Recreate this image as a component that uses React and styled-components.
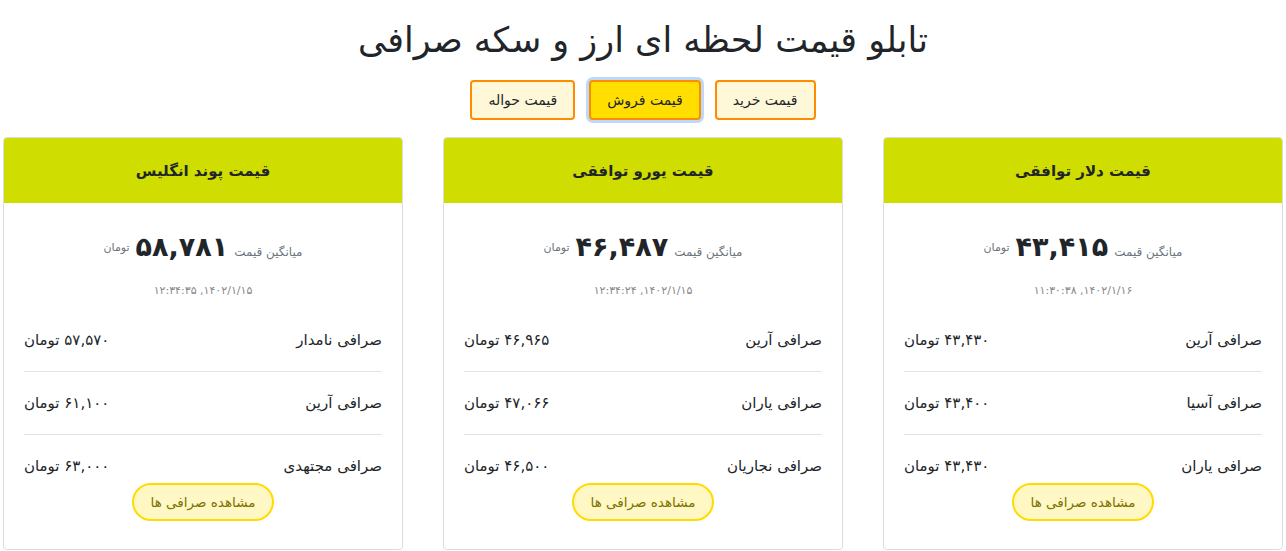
import React, { useState } from "react";
import styled, { createGlobalStyle } from "styled-components";

const GlobalStyle = createGlobalStyle`
  body { margin: 0; background: #fff; font-family: "DejaVu Sans", "Noto Sans", sans-serif; color: #212529; }
`;

const Page = styled.div`
  direction: rtl;
  padding-top: 14px;
`;

const Title = styled.h1`
  margin: 0;
  text-align: center;
  font-size: 35px;
  font-weight: 400;
  line-height: 52px;
  color: #212529;
`;

const Tabs = styled.div`
  display: flex;
  justify-content: center;
  gap: 14px;
  margin-top: 14px;
`;

const Tab = styled.button`
  font-family: inherit;
  font-size: 14px;
  height: 40px;
  padding: 0 16px;
  border: 2px solid #ff8c00;
  border-radius: 4px;
  background: ${(p) => (p.$active ? "#ffde00" : "#fff8d8")};
  color: #212529;
  box-shadow: ${(p) => (p.$active ? "0 0 0 3px #bcd8fb" : "none")};
  cursor: pointer;
`;

const Grid = styled.div`
  display: grid;
  grid-template-columns: repeat(3, 400px);
  justify-content: center;
  gap: 40px;
  margin-top: 17px;
`;

const Card = styled.div`
  border: 1px solid #dcdcdc;
  border-radius: 4px;
  overflow: hidden;
  background: #fff;
  height: 411px;
`;

const CardHeader = styled.div`
  height: 65px;
  background: #d0dd00;
  display: flex;
  align-items: center;
  justify-content: center;
  font-size: 15px;
  font-weight: 700;
  color: #212529;
`;

const CardBody = styled.div`
  padding: 0 20px;
`;

const Average = styled.div`
  display: flex;
  justify-content: center;
  align-items: baseline;
  gap: 6px;
  margin-top: 28px;
  height: 36px;
  color: #6c757d;
  font-size: 12px;
`;

const BigNumber = styled.span`
  font-size: 27px;
  font-weight: 700;
  color: #212529;
`;

const Unit = styled.span`
  font-size: 11px;
  position: relative;
  top: -5px;
`;

const DateLine = styled.div`
  text-align: center;
  color: #888;
  font-size: 11px;
  line-height: 14px;
  margin-top: 17px;
  margin-bottom: 11px;
`;

const Row = styled.div`
  display: flex;
  justify-content: space-between;
  align-items: center;
  line-height: 22px;
  font-size: 15px;
  color: #212529;
  padding: ${(p) => (p.$last ? "20px 0 0" : "20px 0")};
  border-bottom: ${(p) => (p.$last ? "none" : "1px solid #e3e3e3")};
`;

const MoreButton = styled.button`
  display: block;
  margin: 6px auto 0;
  font-family: inherit;
  font-size: 13.5px;
  height: 38px;
  padding: 0 17px;
  border: 2px solid #ffdb00;
  border-radius: 20px;
  background: #fff7c4;
  color: #7d7200;
  cursor: pointer;
`;

const cards = [
  {
    title: "قیمت دلار توافقی",
    avg: "۴۳,۴۱۵",
    date: "۱۴۰۲/۱/۱۶, ۱۱:۳۰:۳۸",
    rows: [
      ["صرافی آرین", "۴۳,۴۳۰"],
      ["صرافی آسیا", "۴۳,۴۰۰"],
      ["صرافی یاران", "۴۳,۴۳۰"],
    ],
  },
  {
    title: "قیمت یورو توافقی",
    avg: "۴۶,۴۸۷",
    date: "۱۴۰۲/۱/۱۵, ۱۲:۳۴:۲۴",
    rows: [
      ["صرافی آرین", "۴۶,۹۶۵"],
      ["صرافی یاران", "۴۷,۰۶۶"],
      ["صرافی نجاریان", "۴۶,۵۰۰"],
    ],
  },
  {
    title: "قیمت پوند انگلیس",
    avg: "۵۸,۷۸۱",
    date: "۱۴۰۲/۱/۱۵, ۱۲:۳۴:۳۵",
    rows: [
      ["صرافی نامدار", "۵۷,۵۷۰"],
      ["صرافی آرین", "۶۱,۱۰۰"],
      ["صرافی مجتهدی", "۶۳,۰۰۰"],
    ],
  },
];

const tabs = ["قیمت خرید", "قیمت فروش", "قیمت حواله"];

export default function App() {
  const [active, setActive] = useState(1);

  return (
    <Page>
      <GlobalStyle />
      <Title>تابلو قیمت لحظه ای ارز و سکه صرافی</Title>
      <Tabs>
        {tabs.map((t, i) => (
          <Tab key={t} $active={i === active} onClick={() => setActive(i)}>
            {t}
          </Tab>
        ))}
      </Tabs>
      <Grid>
        {cards.map((c) => (
          <Card key={c.title}>
            <CardHeader>{c.title}</CardHeader>
            <CardBody>
              <Average>
                <span>میانگین قیمت</span>
                <BigNumber>{c.avg}</BigNumber>
                <Unit>تومان</Unit>
              </Average>
              <DateLine>{c.date}</DateLine>
              {c.rows.map(([name, price], i) => (
                <Row key={name} $last={i === c.rows.length - 1}>
                  <span>{name}</span>
                  <span>{price} تومان</span>
                </Row>
              ))}
              <MoreButton>مشاهده صرافی ها</MoreButton>
            </CardBody>
          </Card>
        ))}
      </Grid>
    </Page>
  );
}
